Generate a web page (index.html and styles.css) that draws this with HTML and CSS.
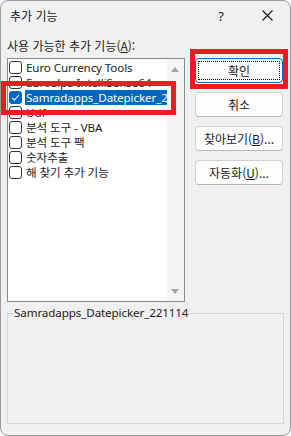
FILE: index.html
```html
<!DOCTYPE html>
<html lang="ko">
<head>
    <meta charset="UTF-8">
    <title>추가 기능</title>
    <link rel="stylesheet" href="styles.css">
</head>
<body>

    <div class="dialog">
        <div class="titlebar">
            <span class="title">추가 기능</span>
            <span class="help">?</span>
            <span class="close">
                <svg width="11" height="11" viewBox="0 0 11 11"><path d="M0.5 0.5 L10.5 10.5 M10.5 0.5 L0.5 10.5" stroke="#1a1a1a" stroke-width="1.1" fill="none"/></svg>
            </span>
        </div>

        <div class="content">
            <div class="list-label">사용 가능한 추가 기능(<u>A</u>):</div>

            <div class="main">
                <div class="listbox">
                    <div class="items">
                        <div class="item"><span class="check"></span><span class="name">Euro Currency Tools</span></div>
                        <div class="item"><span class="check"></span><span class="name">Euroalpa IntelliSense64</span></div>
                        <div class="item selected">
                            <span class="check checked">
                                <svg width="11" height="11" viewBox="0 0 11 11"><path d="M2 5.8 L4.4 8 L9 3" stroke="#fff" stroke-width="1.1" fill="none"/></svg>
                            </span>
                            <span class="name">Samradapps_Datepicker_221114</span>
                        </div>
                        <div class="item"><span class="check"></span><span class="name">Udf</span></div>
                        <div class="item"><span class="check"></span><span class="name">분석 도구 - VBA</span></div>
                        <div class="item"><span class="check"></span><span class="name">분석 도구 팩</span></div>
                        <div class="item"><span class="check"></span><span class="name">숫자추출</span></div>
                        <div class="item"><span class="check"></span><span class="name">해 찾기 추가 기능</span></div>
                    </div>
                    <div class="scrollbar">
                        <span class="arrow up"></span>
                        <span class="arrow down"></span>
                    </div>
                </div>

                <div class="buttons">
                    <button class="btn default"><span class="focus">확인</span></button>
                    <button class="btn">취소</button>
                    <button class="btn">찾아보기(<u>B</u>)...</button>
                    <button class="btn">자동화(<u>U</u>)...</button>
                </div>
            </div>

            <div class="desc">
                <span class="desc-title">Samradapps_Datepicker_221114</span>
            </div>
        </div>

        <!-- annotation marks drawn over the dialog -->
        <div class="mark mark-item"></div>
        <div class="mark mark-ok"></div>
    </div>

</body>
</html>
```

FILE: styles.css
```css
html, body {
    margin: 0;
    padding: 0;
    background-color: #ffffff;
}
body {
    font-family: "Noto Sans", "Noto Sans CJK KR", sans-serif;
    font-size: 12px;
    color: #1a1a1a;
}
.dialog {
    position: relative;
    width: 291px;
    height: 436px;
    box-sizing: border-box;
    border: 1px solid #9a9a9a;
    border-radius: 8px;
    background-color: #f0f0f0;
    overflow: hidden;
}
.titlebar {
    display: flex;
    align-items: center;
    height: 31px;
    padding-left: 9px;
}
.title {
    flex: 1;
    font-family: "Noto Sans CJK KR", sans-serif;
    font-size: 12px;
    line-height: 16px;
    margin-top: -2px;
}
.help {
    width: 46px;
    text-align: center;
    font-size: 13px;
    margin-top: -2px;
}
.close {
    display: flex;
    justify-content: center;
    width: 46px;
    margin-top: -2px;
}
.content {
    padding: 6px 0 0 6px;
}
.list-label {
    font-family: "Noto Sans CJK KR", sans-serif;
    line-height: 16px;
    height: 16px;
    margin-bottom: 4px;
}
.main {
    display: flex;
    gap: 10px;
    height: 244px;
}
.listbox {
    display: flex;
    width: 178px;
    height: 244px;
    box-sizing: border-box;
    border: 1px solid #8a8a8a;
    background-color: #ffffff;
}
.items {
    flex: 1;
    min-width: 0;
    padding-top: 1px;
    padding-left: 1px;
    overflow: hidden;
}
.item {
    display: flex;
    align-items: center;
    height: 15px;
    white-space: nowrap;
}
.check {
    display: flex;
    align-items: center;
    justify-content: center;
    width: 13px;
    height: 13px;
    box-sizing: border-box;
    border: 1px solid #333;
    border-radius: 3px;
    background-color: #fff;
    flex-shrink: 0;
}
.check.checked {
    background-color: #0067c0;
    border-color: #0067c0;
}
.name {
    margin-left: 3px;
    padding: 0 1px;
    line-height: 15px;
    font-size: 11.6px;
    letter-spacing: -0.1px;
}
.selected .name {
    background-color: #0067c0;
    color: #ffffff;
}
.scrollbar {
    position: relative;
    width: 17px;
    background-color: #f4f4f4;
}
.arrow {
    position: absolute;
    left: 4px;
    width: 0;
    height: 0;
    border-left: 4.5px solid transparent;
    border-right: 4.5px solid transparent;
}
.arrow.up {
    top: 8px;
    border-bottom: 5px solid #a3a3a3;
}
.arrow.down {
    bottom: 7px;
    border-top: 5px solid #a3a3a3;
}
.buttons {
    display: flex;
    flex-direction: column;
    gap: 9px;
}
.btn {
    width: 88px;
    height: 25px;
    padding: 0;
    border: 1px solid #d0d0d0;
    border-bottom-color: #b8b8b8;
    border-radius: 4px;
    background-color: #fdfdfd;
    font-family: "Noto Sans CJK KR", sans-serif;
    font-size: 12px;
    color: #1a1a1a;
}
.btn.default {
    border: 1px solid #0067c0;
    padding: 2px;
}
.btn .focus {
    display: flex;
    align-items: center;
    justify-content: center;
    height: 100%;
    box-sizing: border-box;
    border: 1px dotted #000;
}
.desc {
    position: relative;
    width: 277px;
    height: 111px;
    box-sizing: border-box;
    margin-top: 11px;
    border: 1px solid #d5d5d5;
}
.desc-title {
    position: absolute;
    left: 5px;
    top: -9px;
    padding: 0 1px;
    line-height: 16px;
    font-size: 11.6px;
    letter-spacing: -0.1px;
    background-color: #f0f0f0;
}
.mark {
    position: absolute;
    box-sizing: border-box;
    border: 5px solid #ed1c24;
}
.mark-item {
    left: 0px;
    top: 80px;
    width: 175px;
    height: 34px;
}
.mark-ok {
    left: 189px;
    top: 48px;
    width: 98px;
    height: 40px;
}
```
